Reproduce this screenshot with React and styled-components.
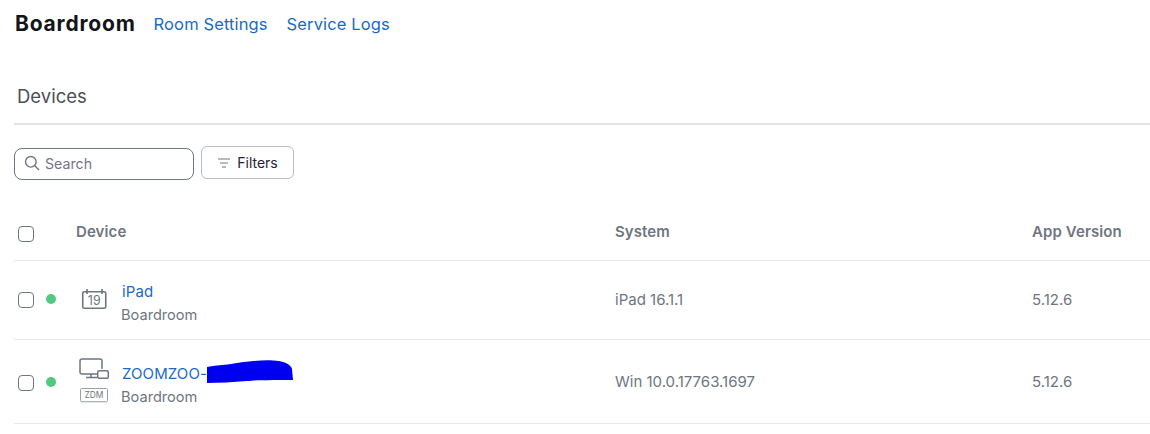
import React from "react";
import styled, { createGlobalStyle } from "styled-components";

const Global = createGlobalStyle`
  html, body { margin: 0; padding: 0; background: #fff; }
  body { font-family: Inter, "Liberation Sans", Arial, sans-serif; color: #232333; }
  * { box-sizing: border-box; }
`;

const Page = styled.div`
  width: 1150px;
  height: 434px;
  padding-left: 14px;
  overflow: hidden;
`;

const TitleBar = styled.header`
  display: flex;
  align-items: center;
  height: 48px;
  padding-left: 1px;
`;

const Title = styled.h1`
  margin: 0 18px 0 0;
  font-size: 21px;
  line-height: 48px;
  font-weight: 700;
  letter-spacing: 0.8px;
  color: #131619;
`;

const NavLink = styled.a`
  font-size: 16.5px;
  letter-spacing: 0.12px;
  color: #1a6ac8;
  margin-right: 19px;
  text-decoration: none;
`;

const TabBar = styled.div`
  height: 77px;
  padding: 36px 0 0 3px;
  border-bottom: 2px solid #e3e4e6;
  font-size: 18.5px;
  line-height: 24px;
  color: #4a4f57;
`;

const Toolbar = styled.div`
  display: flex;
  align-items: flex-start;
  gap: 7px;
  height: 83px;
  padding-top: 21px;
`;

const SearchBox = styled.div`
  display: flex;
  align-items: center;
  gap: 5px;
  width: 180px;
  height: 32px;
  margin-top: 2px;
  padding: 0 0 2px 9px;
  border: 1px solid #6e7680;
  border-radius: 8px;
  font-size: 14.2px;
  color: #747487;
`;

const FilterButton = styled.button`
  display: flex;
  align-items: center;
  justify-content: center;
  gap: 7px;
  width: 93px;
  height: 33px;
  padding: 0 0 0 1px;
  background: #fff;
  border: 1px solid #babacc;
  border-radius: 6px;
  font: inherit;
  font-size: 14px;
  color: #232333;
`;

const Row = styled.div`
  display: grid;
  grid-template-columns: 62px 539px 417px 1fr;
  align-items: center;
  height: ${(p) => p.$h}px;
  padding-bottom: ${(p) => p.$pb || 0}px;
  border-bottom: 1px solid #e8e9eb;
  font-size: 15px;
  color: #6e7680;
`;

const HeadCell = styled.div`
  font-weight: 600;
  color: #6e7680;
  letter-spacing: 0.1px;
`;

const Check = styled.span`
  display: block;
  width: 16px;
  height: 16px;
  margin-left: 4px;
  margin-top: ${(p) => p.$mt || 0}px;
  border: 1px solid #6e7680;
  border-radius: 4px;
  background: #fff;
`;

const CheckCell = styled.div`
  display: flex;
  align-items: center;
  gap: 12px;
`;

const Dot = styled.span`
  width: 10px;
  height: 10px;
  border-radius: 50%;
  background: #4fca7f;
`;

const DeviceCell = styled.div`
  display: grid;
  grid-template-columns: 45px 1fr;
  align-items: center;
`;

const IconStack = styled.div`
  display: flex;
  flex-direction: column;
  align-items: flex-start;
  gap: ${(p) => p.$gap || 0}px;
  padding-left: ${(p) => p.$pl || 0}px;
  margin-top: ${(p) => p.$mt || 0}px;
`;

const NameStack = styled.div`
  display: flex;
  flex-direction: column;
  gap: 5px;
  padding-top: ${(p) => p.$pt}px;
`;

const DeviceName = styled.a`
  display: flex;
  align-items: center;
  height: 18px;
  margin-left: 1px;
  font-size: 15px;
  letter-spacing: 0.1px;
  line-height: 18px;
  color: #1a6ac8;
  text-decoration: none;
`;

const Location = styled.span`
  font-size: 14.6px;
  line-height: 18px;
  color: #6e7680;
`;

const Scribble = styled.svg`
  display: block;
  flex: none;
  margin: -5px 0 0 0;
`;

const Calendar = () => (
  <svg width="28" height="24" viewBox="0 0 28 24" fill="none">
    <rect x="2.75" y="4.75" width="23" height="16.5" rx="1.5" stroke="#6e7680" strokeWidth="1.6" />
    <path d="M7 2v5M22 2v5" stroke="#6e7680" strokeWidth="1.6" />
    <text x="14.25" y="18" textAnchor="middle" fontSize="12.5" fontFamily="Inter, sans-serif" fill="#6e7680">19</text>
  </svg>
);

const Desktop = () => (
  <svg width="31" height="21" viewBox="0 0 31 21" fill="none">
    <path d="M19 16H3a2 2 0 0 1-2-2V3a2 2 0 0 1 2-2h18a2 2 0 0 1 2 2v8" stroke="#6e7680" strokeWidth="1.5" />
    <path d="M12 16v3M7 19.5h11" stroke="#6e7680" strokeWidth="1.5" />
    <rect x="18.7" y="12.7" width="10.6" height="7.6" rx="1.5" stroke="#6e7680" strokeWidth="1.5" />
  </svg>
);

const ZdmBadge = () => (
  <svg width="29" height="15" viewBox="0 0 29 15" fill="none" style={{ marginLeft: 1 }}>
    <rect x="0.5" y="0.5" width="27" height="13" rx="1" stroke="#9a9fa6" />
    <path d="M1 14h26" stroke="#c9ccd0" strokeWidth="1" />
    <text x="14" y="10" textAnchor="middle" fontSize="8.4" fontFamily="Inter, sans-serif" fill="#6e7680">ZDM</text>
  </svg>
);

const BlueScribble = () => (
  <Scribble width="86" height="25" viewBox="0 0 86 25">
    <path d="M0 8 C10 6 20 6 30 4 C42 2 56 1 66 1.5 C76 2 84 5 85 10 L86 21 C70 21 50 21 40 22 C26 23 12 24 0 24 Z" fill="#0000f0" />
  </Scribble>
);

const SearchIcon = () => (
  <svg width="16" height="16" viewBox="0 0 16 16" fill="none" stroke="#6e7680" strokeWidth="1.4">
    <circle cx="6.8" cy="6.8" r="5.3" />
    <path d="M10.8 10.8 15 15" />
  </svg>
);

const FilterIcon = () => (
  <svg width="12" height="10" viewBox="0 0 12 10" fill="none" stroke="#6e7680" strokeWidth="1.1">
    <path d="M0 1h12M2 5h8M4 9h4" />
  </svg>
);

export default function App() {
  return (
    <Page>
      <Global />
      <TitleBar>
        <Title>Boardroom</Title>
        <NavLink>Room Settings</NavLink>
        <NavLink>Service Logs</NavLink>
      </TitleBar>
      <TabBar>Devices</TabBar>
      <Toolbar>
        <SearchBox>
          <SearchIcon />
          Search
        </SearchBox>
        <FilterButton>
          <FilterIcon />
          Filters
        </FilterButton>
      </Toolbar>
      <Row $h={53} $pb={5}>
        <Check $mt={5} />
        <HeadCell>Device</HeadCell>
        <HeadCell>System</HeadCell>
        <HeadCell>App Version</HeadCell>
      </Row>
      <Row $h={79} $pb={2}>
        <CheckCell>
          <Check $mt={2} />
          <Dot />
        </CheckCell>
        <DeviceCell>
          <IconStack $pl={4}>
            <Calendar />
          </IconStack>
          <NameStack $pt={8}>
            <DeviceName>iPad</DeviceName>
            <Location>Boardroom</Location>
          </NameStack>
        </DeviceCell>
        <span>iPad 16.1.1</span>
        <span>5.12.6</span>
      </Row>
      <Row $h={84}>
        <CheckCell>
          <Check $mt={2} />
          <Dot />
        </CheckCell>
        <DeviceCell>
          <IconStack $gap={9} $pl={3} $mt={-3}>
            <Desktop />
            <ZdmBadge />
          </IconStack>
          <NameStack $pt={8}>
            <DeviceName>
              ZOOMZOO-
              <BlueScribble />
            </DeviceName>
            <Location>Boardroom</Location>
          </NameStack>
        </DeviceCell>
        <span>Win 10.0.17763.1697</span>
        <span>5.12.6</span>
      </Row>
    </Page>
  );
}
